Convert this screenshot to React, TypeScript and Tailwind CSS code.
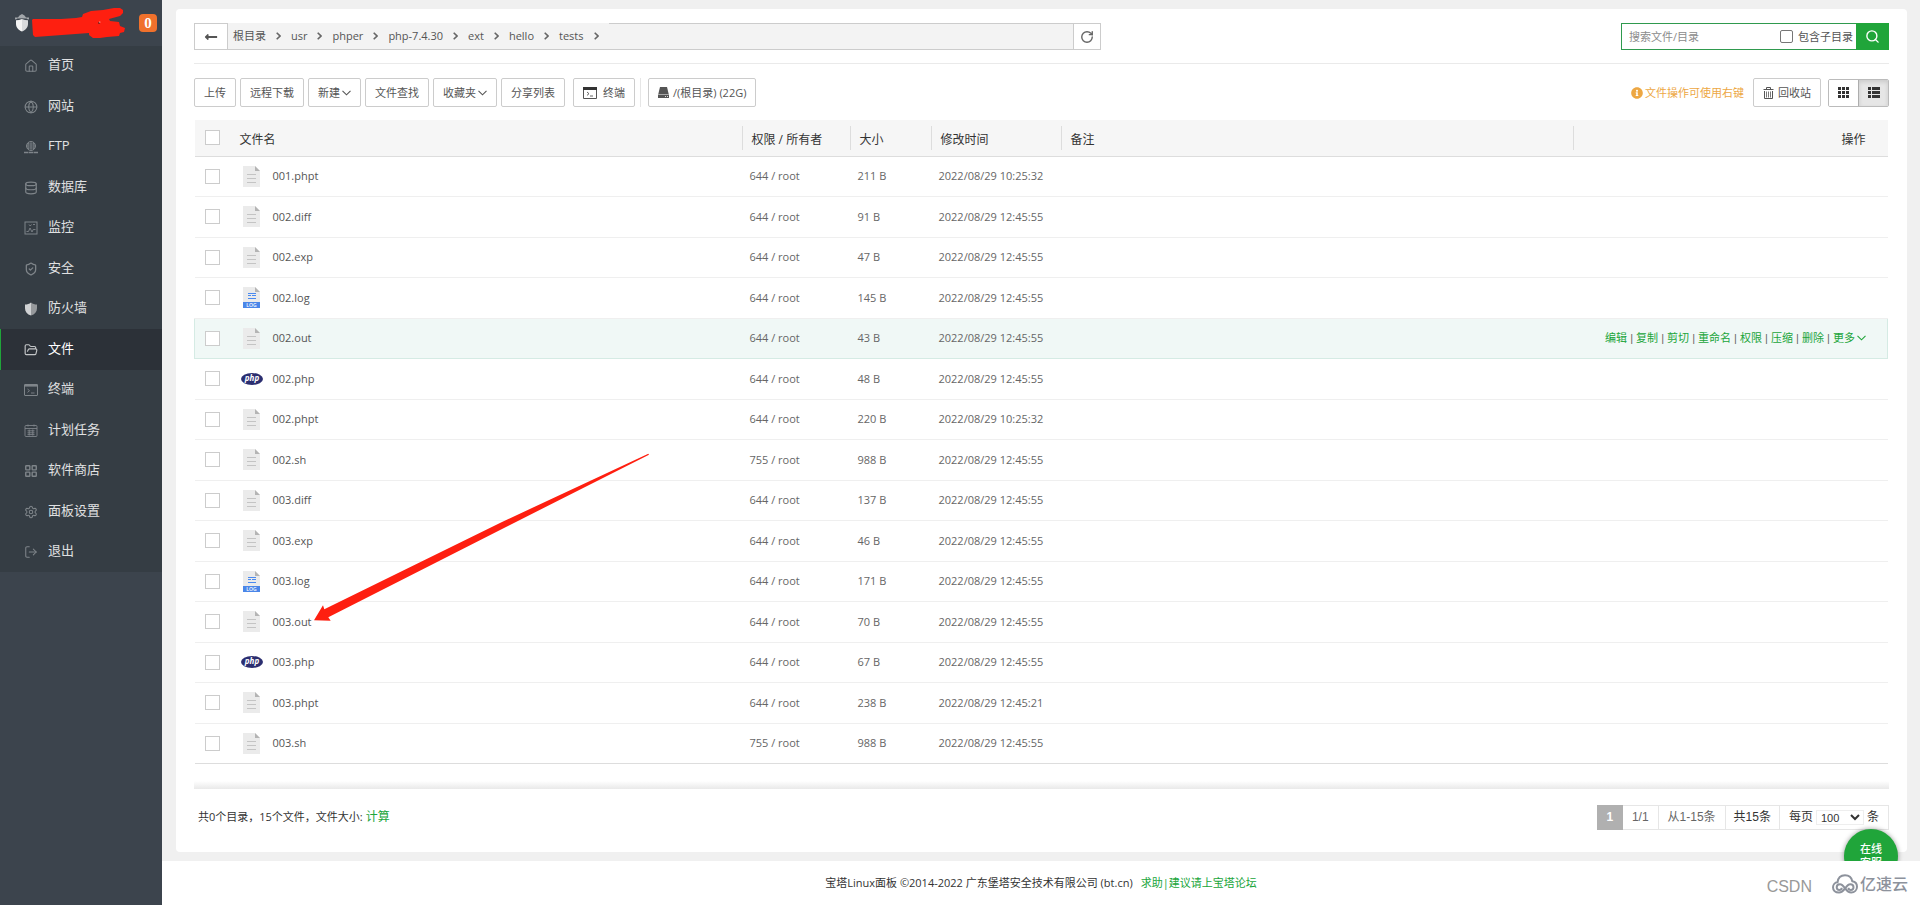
import React from "react";
import {
  Database,
  FolderOpen,
  Globe,
  House,
  LayoutGrid,
  LogOut,
  RotateCw,
  Search,
  Settings,
  ShieldCheck,
} from "lucide-react";
import { FaInfoCircle, FaLongArrowAltLeft } from "react-icons/fa";

const lineIcon = "h-[14px] w-[14px] shrink-0";

function FtpIcon() {
  return (
    <svg viewBox="0 0 14 14" className={lineIcon} fill="none" stroke="currentColor">
      <circle cx="7" cy="6" r="4.5" />
      <path d="M2.5 6h9M7 1.5v9M4.8 2.4c-1 2.4-1 4.8 0 7.2M9.2 2.4c1 2.4 1 4.8 0 7.2M3 4h8M3 8h8" strokeWidth="0.8" />
      <path d="M0 12.5h4.5M9.5 12.5H14M5 12.5h4" strokeWidth="1.4" />
    </svg>
  );
}

function MonitorIcon() {
  return (
    <svg viewBox="0 0 14 14" className={lineIcon} fill="none" stroke="currentColor">
      <rect x="1" y="1" width="12" height="12" />
      <path d="M2.5 10.5h2L6 7l2 4 1.2-2.5h2.3M5 3.5l1.2 1.5L7.5 3.5M9 3.5h2" strokeWidth="0.9" />
    </svg>
  );
}

function FirewallIcon() {
  return (
    <svg viewBox="0 0 14 14" className={lineIcon}>
      <path d="M7 0.5C5.3 1.9 3.3 2.5 1 2.6v3.6c0 3.5 2.2 6 6 7.4z" fill="#d0d2d4" />
      <path d="M7 0.5c1.7 1.4 3.7 2 6 2.1v3.6c0 3.5-2.2 6-6 7.4z" fill="#96999c" />
    </svg>
  );
}

function TerminalIcon({ className }: { className: string }) {
  return (
    <svg viewBox="0 0 14 12" className={className} fill="none" stroke="currentColor">
      <rect x="0.5" y="0.5" width="13" height="11" rx="0.5" />
      <path d="M0.5 1.5h13" strokeWidth="2.2" />
      <path d="M3.5 5l2 1.700-2 1.700M7 9h3.500" strokeWidth="0.9" />
    </svg>
  );
}

function CalendarIcon() {
  return (
    <svg viewBox="0 0 14 14" className={lineIcon} fill="none" stroke="currentColor" strokeWidth="0.9">
      <rect x="1" y="1.5" width="12" height="11" rx="1" />
      <path d="M1 4.5h12M3.5 6.8h7M3.5 8.8h7M3.5 10.6h7M5.2 5.5v6M8.8 5.5v6M4 0.5v2M10 0.5v2" />
    </svg>
  );
}

function CaretDown() {
  return (
    <svg viewBox="0 0 9 6" className="ml-[2px] h-[6px] w-[9px]" fill="none" stroke="currentColor" strokeWidth="1.1">
      <path d="M0.5 0.8L4.5 4.800 8.500 0.800" />
    </svg>
  );
}

function CrumbArrow() {
  return (
    <svg viewBox="0 0 5 8" className="mx-[10px] h-2 w-[5px]" fill="none" stroke="#666" strokeWidth="1.6">
      <path d="M0.700 0.700L4 4 0.700 7.300" />
    </svg>
  );
}

type MenuItem = { label: string; icon: React.ReactNode; active?: boolean };

const menu: MenuItem[] = [
  { label: "首页", icon: <House className={lineIcon} strokeWidth={1.8} /> },
  { label: "网站", icon: <Globe className={lineIcon} strokeWidth={1.8} /> },
  { label: "FTP", icon: <FtpIcon /> },
  { label: "数据库", icon: <Database className={lineIcon} strokeWidth={2} /> },
  { label: "监控", icon: <MonitorIcon /> },
  { label: "安全", icon: <ShieldCheck className={lineIcon} strokeWidth={2.2} /> },
  { label: "防火墙", icon: <FirewallIcon /> },
  { label: "文件", icon: <FolderOpen className={lineIcon} strokeWidth={2} />, active: true },
  { label: "终端", icon: <TerminalIcon className={lineIcon} /> },
  { label: "计划任务", icon: <CalendarIcon /> },
  { label: "软件商店", icon: <LayoutGrid className={lineIcon} strokeWidth={2.4} /> },
  { label: "面板设置", icon: <Settings className={lineIcon} strokeWidth={1.8} /> },
  { label: "退出", icon: <LogOut className={lineIcon} strokeWidth={1.8} /> },
];

const crumbs = ["根目录", "usr", "phper", "php-7.4.30", "ext", "hello", "tests"];

type Kind = "file" | "log" | "php";
type Row = { name: string; kind: Kind; perm: string; size: string; time: string; active?: boolean };

const rows: Row[] = [
  { name: "001.phpt", kind: "file", perm: "644 / root", size: "211 B", time: "2022/08/29 10:25:32" },
  { name: "002.diff", kind: "file", perm: "644 / root", size: "91 B", time: "2022/08/29 12:45:55" },
  { name: "002.exp", kind: "file", perm: "644 / root", size: "47 B", time: "2022/08/29 12:45:55" },
  { name: "002.log", kind: "log", perm: "644 / root", size: "145 B", time: "2022/08/29 12:45:55" },
  { name: "002.out", kind: "file", perm: "644 / root", size: "43 B", time: "2022/08/29 12:45:55", active: true },
  { name: "002.php", kind: "php", perm: "644 / root", size: "48 B", time: "2022/08/29 12:45:55" },
  { name: "002.phpt", kind: "file", perm: "644 / root", size: "220 B", time: "2022/08/29 10:25:32" },
  { name: "002.sh", kind: "file", perm: "755 / root", size: "988 B", time: "2022/08/29 12:45:55" },
  { name: "003.diff", kind: "file", perm: "644 / root", size: "137 B", time: "2022/08/29 12:45:55" },
  { name: "003.exp", kind: "file", perm: "644 / root", size: "46 B", time: "2022/08/29 12:45:55" },
  { name: "003.log", kind: "log", perm: "644 / root", size: "171 B", time: "2022/08/29 12:45:55" },
  { name: "003.out", kind: "file", perm: "644 / root", size: "70 B", time: "2022/08/29 12:45:55" },
  { name: "003.php", kind: "php", perm: "644 / root", size: "67 B", time: "2022/08/29 12:45:55" },
  { name: "003.phpt", kind: "file", perm: "644 / root", size: "238 B", time: "2022/08/29 12:45:21" },
  { name: "003.sh", kind: "file", perm: "755 / root", size: "988 B", time: "2022/08/29 12:45:55" },
];

const rowActions = ["编辑", "复制", "剪切", "重命名", "权限", "压缩", "删除", "更多"];

function FileIcon({ kind }: { kind: Kind }) {
  if (kind === "php") {
    return (
      <svg viewBox="0 0 22 12" className="h-3 w-[22px] overflow-visible">
        <ellipse cx="11" cy="6" rx="11" ry="6" fill="#2b2e70" />
        <text
          x="11"
          y="8"
          textAnchor="middle"
          fontFamily="Open Sans, sans-serif"
          fontSize="8"
          fontWeight="700"
          fontStyle="italic"
          fill="#fff"
        >
          php
        </text>
      </svg>
    );
  }
  return (
    <svg viewBox="0 0 17 21" className="h-[21px] w-[17px]">
      <path d="M0 0h12l5 5v16H0z" fill="#ebebeb" />
      <path d="M12 0l5 5h-5z" fill="#b4b4b4" />
      {kind === "file" ? (
        <path d="M4 8.500h9M4 12.500h9M4 16.500h9" stroke="#c4c4c4" />
      ) : (
        <>
          <path d="M5 6.500h8M5 8.500h3M9 8.500h4M5 11.500h8" stroke="#4a8af0" />
          <path d="M0 15h17v6H0z" fill="#4a86e8" />
          <text
            x="8.5"
            y="20"
            textAnchor="middle"
            fontFamily="Open Sans, sans-serif"
            fontSize="5"
            fontWeight="600"
            fill="#fff"
          >
            LOG
          </text>
        </>
      )}
    </svg>
  );
}

function Check({ label }: { label: string }) {
  return (
    <input
      type="checkbox"
      aria-label={label}
      className="ml-[10px] block h-[15px] w-[15px] appearance-none border border-[#ccc] bg-white"
    />
  );
}

function ToolButton({ children }: { children: React.ReactNode }) {
  return (
    <button
      type="button"
      className="flex h-[29px] items-center whitespace-nowrap rounded-xs border border-[#ccc] bg-white px-[9px] text-[#555]"
    >
      {children}
    </button>
  );
}

function Sidebar() {
  return (
    <aside className="w-[162px] shrink-0 bg-[#3c444d]">
      <div className="flex h-[46px] items-center pl-[15px] pr-[5px]">
        <svg viewBox="0 0 14 18" className="h-[18px] w-[14px] shrink-0">
          <path d="M0 3.500h3l1.500-2L7 0l2.500 1.500 1.500 2h3v2l-7-1.500-7 1.500z" fill="#a3a7ab" />
          <path d="M2 4.500h10" stroke="#6b7177" strokeWidth="0.8" />
          <path d="M7 5c-2 .8-4 1.200-6 1.300V10c0 3.500 2.500 6 6 7.500z" fill="#f4f4f4" />
          <path d="M7 5c2 .8 4 1.200 6 1.300V10c0 3.500-2.500 6-6 7.500z" fill="#d9dbdd" />
        </svg>
        <svg viewBox="0 0 94 30" className="ml-[2px] h-[30px] w-[94px] shrink-0" fill="#fe1f10">
          <path d="M1 12l1-1 28 0 15-1 6-1 1-3 8-3 12-1 11-2 6 0 3 2 0 3-3 3-11 3 1 2 9 1 1 4 5 2-1 4-4 1-1 3-12 1-7 1-7 0-4-3 0-2-54 4-2-2z" />
          <circle cx="68" cy="15" r="0.800" fill="#222" />
          <circle cx="68.800" cy="14" r="0.600" fill="#fff" />
        </svg>
        <span className="ml-auto flex h-[18px] w-[18px] items-center justify-center rounded bg-[#f0712c] font-['Liberation_Serif',serif] text-[15px] font-bold leading-none text-white">
          0
        </span>
      </div>
      <nav className="bg-[#353d44]">
        <ul>
          {menu.map((item) => (
            <li key={item.label} className="odd:h-10 even:h-[41px]">
              <a
                href="#"
                className={
                  item.active
                    ? "flex h-full items-center gap-[10px] border-l border-[#20a53a] bg-[#2c3138] pl-[23px] text-[13px] text-white"
                    : "flex h-full items-center gap-[10px] pl-6 text-[13px] text-[#e0e1e2]"
                }
              >
                <span className={item.active ? "text-[#c3c5c7]" : "text-[#7f858a]"}>{item.icon}</span>
                <span className="pb-1">{item.label}</span>
              </a>
            </li>
          ))}
        </ul>
      </nav>
    </aside>
  );
}

function PathBar() {
  return (
    <div className="flex items-center justify-between border-b border-[#eaeaea] pb-[13px]">
      <div className="flex h-[27px] w-[907px]">
        <button
          type="button"
          aria-label="返回"
          className="flex w-[34px] shrink-0 items-center justify-center border border-[#ccc] bg-white text-[#555]"
        >
          <FaLongArrowAltLeft className="h-[14px] w-[14px]" />
        </button>
        <nav className="flex items-center border-b border-t border-b-[#ccc] border-t-[#f3f3f3] bg-[#f3f3f3] pb-[2px] pl-[5px] text-[#555]">
          {crumbs.map((c) => (
            <span key={c} className="flex items-center">
              <a href="#">{c}</a>
              <CrumbArrow />
            </span>
          ))}
        </nav>
        <div className="flex-1 border-y border-[#ccc] bg-[#f3f3f3]" />
        <button
          type="button"
          aria-label="刷新"
          className="flex w-7 shrink-0 items-center justify-center border border-[#ccc] bg-white text-[#666]"
        >
          <RotateCw className="h-[14px] w-[14px]" strokeWidth={2.4} />
        </button>
      </div>
      <form className="flex h-[27px]" onSubmit={(e) => e.preventDefault()}>
        <div className="flex items-center border border-r-0 border-[#2f9a4e] bg-white pl-[7px] pr-[3px]">
          <input
            type="text"
            aria-label="搜索文件/目录"
            placeholder="搜索文件/目录"
            className="w-[151px] outline-none placeholder:text-[#8c8c8c]"
          />
          <label className="flex items-center gap-[5px] whitespace-nowrap text-[#555]">
            <input
              type="checkbox"
              className="h-[13px] w-[13px] appearance-none rounded-xs border border-[#767676] bg-white"
            />
            包含子目录
          </label>
        </div>
        <button
          type="submit"
          aria-label="搜索"
          className="flex w-[33px] items-center justify-center bg-[#20a53a] text-white"
        >
          <Search className="h-[15px] w-[15px]" strokeWidth={2.2} />
        </button>
      </form>
    </div>
  );
}

function Toolbar() {
  return (
    <div className="mt-[14px] flex items-center justify-between">
      <div className="flex items-center gap-1">
        <ToolButton>上传</ToolButton>
        <ToolButton>远程下载</ToolButton>
        <ToolButton>
          新建
          <CaretDown />
        </ToolButton>
        <ToolButton>文件查找</ToolButton>
        <ToolButton>
          收藏夹
          <CaretDown />
        </ToolButton>
        <ToolButton>分享列表</ToolButton>
        <div className="flex items-center border-r border-[#e6e6e6] pl-1 pr-[5px]">
          <ToolButton>
            <svg viewBox="0 0 14 12" className="mr-[6px] h-3 w-[14px]" fill="none" stroke="#555">
              <path d="M0.500 1v10.500h13V1" />
              <path d="M0 1.500h14" stroke="#333" strokeWidth="3" />
              <path d="M4 5l2 1.700-2 1.700M7 9h3" strokeWidth="0.900" />
            </svg>
            终端
          </ToolButton>
        </div>
        <div className="pl-[3px]">
          <ToolButton>
            <svg viewBox="0 0 11 11" className="mr-1 h-[11px] w-[11px]" fill="#555">
              <path d="M2 0h7l1.700 7H0.300z" />
              <path d="M0 7.500h11V11H0z" />
              <path d="M7 9.500h1M9 9.500h1" stroke="#fff" strokeWidth="0.800" />
            </svg>
            /(根目录) (22G)
          </ToolButton>
        </div>
      </div>
      <div className="flex items-center">
        <span className="flex items-center gap-[2px] pr-[9px] text-[#eda743]">
          <FaInfoCircle className="h-3 w-3" />
          文件操作可使用右键
        </span>
        <ToolButton>
          <svg viewBox="0 0 11 12" className="mr-1 h-3 w-[11px]" fill="none" stroke="currentColor">
            <path d="M0.500 2.500h10M3.500 2.500V0.500h4v2M1.500 4v7.500h8V4" />
            <path d="M3.500 4.500v6M5.500 4.500v6M7.500 4.500v6" strokeWidth="0.800" />
          </svg>
          回收站
        </ToolButton>
        <div className="ml-[7px] flex h-7 overflow-hidden rounded-xs border border-[#bbb] text-[#333]">
          <button type="button" aria-label="网格视图" className="flex w-[29px] items-center justify-center bg-white">
            <svg viewBox="0 0 11 11" className="h-[11px] w-[11px]" fill="currentColor">
              <path d="M0 0h3v3H0zM4 0h3v3H4zM8 0h3v3H8zM0 4h3v3H0zM4 4h3v3H4zM8 4h3v3H8zM0 8h3v3H0zM4 8h3v3H4zM8 8h3v3H8z" />
            </svg>
          </button>
          <button
            type="button"
            aria-label="列表视图"
            className="flex w-[30px] items-center justify-center border-l border-[#adadad] bg-[#e6e6e6] shadow-[inset_0_2px_4px_rgba(0,0,0,0.125)]"
          >
            <svg viewBox="0 0 12 11" className="h-[11px] w-3" fill="currentColor">
              <path d="M0 0h3v3H0zM4 0h8v3H4zM0 4h3v3H0zM4 4h8v3H4zM0 8h3v3H0zM4 8h8v3H4z" />
            </svg>
          </button>
        </div>
      </div>
    </div>
  );
}

function FileTable() {
  const head = "h-6 border-l border-[#ddd] pl-[9px] pt-1 leading-5";
  return (
    <div className="mt-[13px] pr-px">
      <table className="w-full table-fixed border-collapse text-left">
        <colgroup>
          <col className="w-[45px]" />
          <col className="w-[502px]" />
          <col className="w-[108px]" />
          <col className="w-[81px]" />
          <col className="w-[130px]" />
          <col />
          <col className="w-[315px]" />
        </colgroup>
        <thead>
          <tr className="h-9 border-b border-[#ddd] bg-[#f6f6f6] text-xs text-[#333]">
            <th className="p-0">
              <Check label="全选" />
            </th>
            <th className="p-0 pt-1 font-normal">文件名</th>
            <th className="p-0 font-normal">
              <div className={head}>权限 / 所有者</div>
            </th>
            <th className="p-0 font-normal">
              <div className={head}>大小</div>
            </th>
            <th className="p-0 font-normal">
              <div className={head}>修改时间</div>
            </th>
            <th className="p-0 font-normal">
              <div className={head}>备注</div>
            </th>
            <th className="p-0 font-normal">
              <div className="h-6 border-l border-[#ddd] pr-[22px] pt-1 text-right leading-5">操作</div>
            </th>
          </tr>
        </thead>
        <tbody className="text-[#666]">
          {rows.map((r) => (
            <tr
              key={r.name}
              className={
                r.active
                  ? "border border-[#d5ebe4] bg-[#f0f8f6] odd:h-10 even:h-[41px]"
                  : "border-b border-[#efefef] last:border-[#ddd] odd:h-10 even:h-[41px]"
              }
            >
              <td className="p-0">
                <Check label={r.name} />
              </td>
              <td className="p-0">
                <div className="flex items-center">
                  <span className="flex w-[33px] shrink-0 justify-center pr-[9px]">
                    <FileIcon kind={r.kind} />
                  </span>
                  <span className="text-[#555]">{r.name}</span>
                </div>
              </td>
              <td className="p-0 pl-2">{r.perm}</td>
              <td className="p-0 pl-2">{r.size}</td>
              <td className="p-0 pl-2">{r.time}</td>
              <td className="p-0" />
              <td className="p-0">
                {r.active && (
                  <div className="flex items-center justify-end whitespace-pre pr-[21px] text-[#20a53a]">
                    {rowActions.map((a, i) => (
                      <React.Fragment key={a}>
                        {i > 0 && <span className="font-['Liberation_Sans',sans-serif] text-[#666]"> | </span>}
                        <a href="#" className="flex items-center">
                          {a}
                          {a === "更多" && <CaretDown />}
                        </a>
                      </React.Fragment>
                    ))}
                  </div>
                )}
              </td>
            </tr>
          ))}
        </tbody>
      </table>
    </div>
  );
}

function Pager() {
  return (
    <div className="mt-4 flex items-center justify-between">
      <p className="pl-1 text-[#333]">
        共0个目录，15个文件，文件大小:{" "}
        <a href="#" className="text-xs text-[#20a53a]">
          计算
        </a>
      </p>
      <div className="flex h-[25px] items-stretch border border-l-0 border-[#e6e6e6] font-['Liberation_Sans','Noto_Sans_CJK_SC',sans-serif] text-xs text-[#333]">
        <span className="-my-px flex w-[26px] items-center justify-center bg-[#b0b0b0] font-bold text-white">1</span>
        <span className="flex items-center border-r border-[#e6e6e6] px-[9px] text-[#666]">1/1</span>
        <span className="flex items-center border-r border-[#e6e6e6] px-[9px] text-[#666]">从1-15条</span>
        <span className="flex items-center border-r border-[#e6e6e6] px-2">共15条</span>
        <label className="flex items-center gap-[3px] px-[9px]">
          每页
          <select
            className="h-[15px] w-12 border border-[#eee] bg-white text-[11px] leading-none"
            defaultValue="100"
          >
            <option>100</option>
            <option>200</option>
            <option>500</option>
          </select>
          条
        </label>
      </div>
    </div>
  );
}

function Watermarks() {
  return (
    <div className="absolute bottom-[7px] right-3 flex items-center gap-5 text-[#8d929c]">
      <span className="pt-[5px] font-['Liberation_Sans',sans-serif] text-base text-[#999]">CSDN</span>
      <span className="flex items-center gap-[2px] text-base font-medium">
        <svg viewBox="0 0 26 20" className="h-5 w-[26px]" fill="none" stroke="currentColor" strokeWidth="2">
          <path d="M7 18.500C3 18.500 1 16 1 13.300 1 10.500 3 8.500 5.500 8.300 6 4 8.800 1.200 13 1.200c3.800 0 6.600 2.300 7.300 6 3 .5 4.700 2.800 4.700 5.500 0 3.300-2.500 5.800-5.800 5.800-3.200 0-4.600-2-6.200-4.200-1.600-2.300-2.800-4-5-4-2 0-3.300 1.300-3.300 3 0 1.600 1.100 2.700 2.600 2.700 1.400 0 2.400-.9 2.400-2.200" />
          <path d="M7 18.500c3.200 0 4.600-2 6.200-4.200 1.600-2.300 2.800-4 5-4 2 0 3.300 1.300 3.300 3 0 1.600-1.100 2.700-2.600 2.700-1.400 0-2.400-.9-2.400-2.200" />
        </svg>
        亿速云
      </span>
    </div>
  );
}

export default function App() {
  return (
    <div className="relative flex min-h-screen bg-white font-['Open_Sans','Noto_Sans_CJK_SC',sans-serif] text-[11px] leading-4">
      <Sidebar />
      <div className="flex min-w-0 flex-1 flex-col">
        <div className="relative overflow-hidden bg-[#f0f0f0] pb-[9px] pl-[14px] pr-[13px] pt-[9px]">
          <main className="rounded bg-white px-[18px] pb-[22px] pt-[14px]">
            <PathBar />
            <Toolbar />
            <FileTable />
            <div className="mt-[17px] h-2 bg-linear-to-b from-white to-[#e9e9e9]" />
            <Pager />
          </main>
          <button
            type="button"
            className="absolute -bottom-[22px] right-[22px] flex h-[54px] w-[54px] flex-col items-center rounded-full bg-[#20a53a] pt-[13px] font-medium leading-[14px] text-white shadow-[0_0_5px_rgba(0,0,0,0.4)]"
          >
            <span>在线</span>
            <span>客服</span>
          </button>
        </div>
        <footer className="relative flex min-h-[45px] flex-1 items-center justify-center bg-white text-[#333]">
          <span>宝塔Linux面板 ©2014-2022 广东堡塔安全技术有限公司 (bt.cn)</span>
          <a href="#" className="ml-2 text-[#20a53a]">
            求助|建议请上宝塔论坛
          </a>
          <Watermarks />
        </footer>
      </div>
      <svg
        viewBox="0 0 336 168"
        className="pointer-events-none absolute left-[314px] top-[453px] h-[168px] w-[336px]"
        fill="#fe1f10"
      >
        <path d="M0 167.300L9 152.300l1.300 4L188 69 334.300 0.700l0.700 1L192 74 14.300 164.300l2.400 3.400z" />
      </svg>
    </div>
  );
}
